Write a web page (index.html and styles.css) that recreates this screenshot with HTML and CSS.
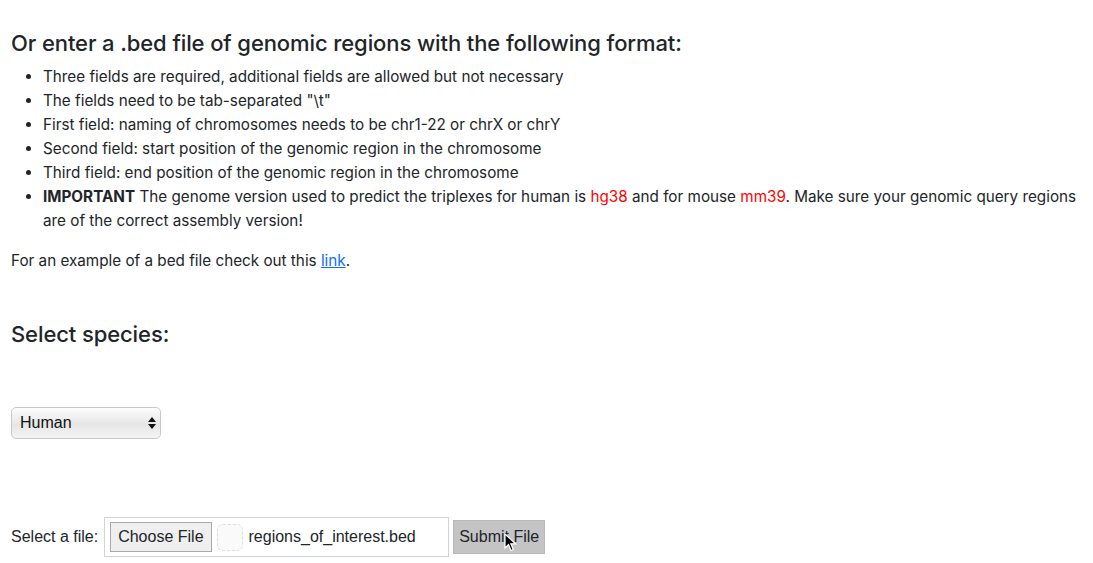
FILE: index.html
```html
<!DOCTYPE html>
<html lang="en">
<head>
    <meta charset="UTF-8">
    <meta name="viewport" content="width=device-width, initial-scale=1.0">
    <title>Upload regions</title>
    <link rel="stylesheet" href="styles.css">
</head>
<body>
    <div class="page">
        <h4 class="title">Or enter a .bed file of genomic regions with the following format:</h4>
        <ul class="rules">
            <li>Three fields are required, additional fields are allowed but not necessary</li>
            <li>The fields need to be tab-separated "\t"</li>
            <li>First field: naming of chromosomes needs to be chr1-22 or chrX or chrY</li>
            <li>Second field: start position of the genomic region in the chromosome</li>
            <li>Third field: end position of the genomic region in the chromosome</li>
            <li><b>IMPORTANT</b> The genome version used to predict the triplexes for human is <span class="red">hg38</span> and for mouse <span class="red">mm39</span>. Make sure your genomic query regions are of the correct assembly version!</li>
        </ul>
        <p>For an example of a bed file check out this <a href="#">link</a>.</p>

        <h4 class="species">Select species:</h4>

        <div class="select-wrap">
            <div class="fake-select">
                <span>Human</span>
                <svg class="arrows" width="8" height="12" viewBox="0 0 8 12">
                    <path d="M4 0 L8 5 L0 5 Z" fill="#111"/>
                    <path d="M4 12 L8 7 L0 7 Z" fill="#111"/>
                </svg>
            </div>
        </div>

        <form class="upload">
            <label>Select a file:</label>
            <div class="file-box">
                <span class="choose">Choose File</span>
                <span class="ghost"></span>
                <span class="fname">regions_of_interest.bed</span>
            </div>
            <span class="submit">Submit File
                <svg class="cursor" width="13" height="19" viewBox="0 0 13 19">
                    <path d="M1 1 L1 15 L4.5 11.5 L7 17.5 L9.3 16.5 L6.8 10.8 L11.5 10.8 Z" fill="#000" stroke="#fff" stroke-width="1.2"/>
                </svg>
            </span>
        </form>
    </div>
</body>
</html>
```

FILE: styles.css
```css
body {
    margin: 0;
    font-family: Inter, "Noto Sans", "Liberation Sans", sans-serif;
    font-size: 15.25px;
    line-height: 24px;
    color: #212529;
    background: #fff;
}

.page {
    padding: 29px 11px 0 11px;
}

h4 {
    font-size: 22px;
    font-weight: 500;
    line-height: 29px;
    letter-spacing: -0.1px;
    margin: 0;
}

.title {
    margin-bottom: 7px;
}

.rules {
    margin: 0 0 16px 0;
    padding-left: 32px;
}

.red {
    color: #ff0000;
}

p {
    margin: 0;
}

a {
    color: #0d6efd;
}

.species {
    margin-top: 47px;
}

.select-wrap {
    margin-top: 58px;
}

.fake-select {
    width: 136px;
    height: 30px;
    border: 1px solid #c8c8c8;
    border-radius: 5px;
    background: linear-gradient(#fdfdfd, #e6e6e6 55%, #f4f4f4);
    display: flex;
    align-items: center;
    justify-content: space-between;
    padding: 0 4px 0 8px;
    box-sizing: content-box;
    font-family: "Liberation Sans", Arial, sans-serif;
    font-size: 16px;
    color: #111;
}

.upload {
    margin-top: 78px;
    display: flex;
    align-items: center;
    font-family: "Liberation Sans", Arial, sans-serif;
    font-size: 16px;
}

.upload label {
    margin-right: 6px;
}

.file-box {
    width: 338px;
    height: 38px;
    border: 1px solid #ced4da;
    display: flex;
    align-items: center;
    padding-left: 5px;
}

.choose {
    border: 1px solid #a9a9a9;
    background: #efefef;
    padding: 2px 7px;
    height: 24px;
    line-height: 24px;
}

.ghost {
    width: 24px;
    height: 25px;
    border: 1px dashed #ddd;
    border-radius: 6px;
    margin-left: 5px;
    background: #fafafa;
}

.fname {
    margin-left: 6px;
}

.submit {
    position: relative;
    margin-left: 4px;
    background: #c4c4c4;
    border: 1px solid #b8b8b8;
    padding: 4px 5px;
    line-height: 24px;
}

.cursor {
    position: absolute;
    left: 50px;
    top: 12px;
}
```
